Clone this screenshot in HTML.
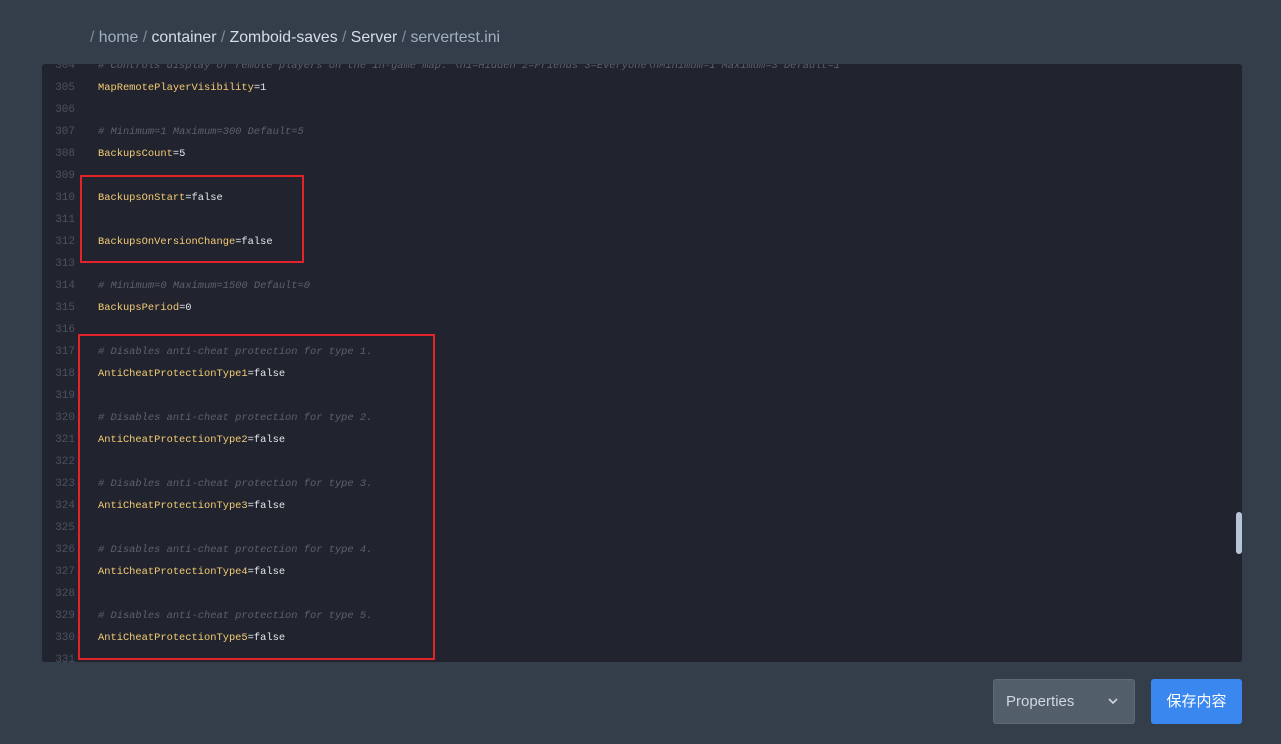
<!DOCTYPE html>
<html><head><meta charset="utf-8"><style>
body{margin:0;width:1281px;height:744px;background:#343e4a;overflow:hidden;font-family:"Liberation Sans","Noto Sans CJK SC",sans-serif;position:relative}
.bc{position:absolute;left:90px;top:29px;font-size:15.8px;color:#d5dde6}
.bc .s{color:#7f8b98}.bc .l{color:#9fb0c0}
.ed{position:absolute;left:42px;top:64px;width:1200px;height:598px;background:#21242e;border-radius:3px;overflow:hidden}
.ln{position:absolute;left:0;height:22px;line-height:22px;font-family:"Liberation Mono",monospace;font-size:10.4px;width:1200px}
.ln .n{position:absolute;left:12px;width:21px;text-align:right;color:#4b5260;font-size:11px}
.ln .c{position:absolute;left:56px;white-space:pre}
.k{color:#f5cc75}.v{color:#e4e7ec}.cm{color:#5a6170;font-style:italic}
.box{position:absolute;border:2px solid #e2232a}
.sb{position:absolute;left:1236px;top:512px;width:6px;height:42px;background:#b7c5d6;border-radius:3px}
.sel{position:absolute;left:993px;top:679px;width:142px;height:45px;background:#535e6b;border:1px solid #5f6a77;border-radius:3px;box-sizing:border-box;color:#cfd6de;font-size:15px;line-height:43px;padding-left:12px}
.sel svg{position:absolute;right:16px;top:18px}
.btn{position:absolute;left:1151px;top:679px;width:91px;height:45px;background:#3a87f0;border-radius:3px;color:#fff;font-size:15px;line-height:45px;text-align:center}
</style></head><body>
<div class="bc"><span class="s">/</span> <span class="l">home</span> <span class="s">/</span> container <span class="s">/</span> Zomboid-saves <span class="s">/</span> Server <span class="s">/</span> <span class="l">servertest.ini</span></div>
<div class="ed">
<div class="ln" style="top:-9px"><span class="n">304</span><span class="c cm"># Controls display of remote players on the in-game map. \n1=Hidden 2=Friends 3=Everyone\nMinimum=1 Maximum=3 Default=1</span></div>
<div class="ln" style="top:13px"><span class="n">305</span><span class="c"><span class="k">MapRemotePlayerVisibility</span><span class="v">=1</span></span></div>
<div class="ln" style="top:35px"><span class="n">306</span></div>
<div class="ln" style="top:57px"><span class="n">307</span><span class="c cm"># Minimum=1 Maximum=300 Default=5</span></div>
<div class="ln" style="top:79px"><span class="n">308</span><span class="c"><span class="k">BackupsCount</span><span class="v">=5</span></span></div>
<div class="ln" style="top:101px"><span class="n">309</span></div>
<div class="ln" style="top:123px"><span class="n">310</span><span class="c"><span class="k">BackupsOnStart</span><span class="v">=false</span></span></div>
<div class="ln" style="top:145px"><span class="n">311</span></div>
<div class="ln" style="top:167px"><span class="n">312</span><span class="c"><span class="k">BackupsOnVersionChange</span><span class="v">=false</span></span></div>
<div class="ln" style="top:189px"><span class="n">313</span></div>
<div class="ln" style="top:211px"><span class="n">314</span><span class="c cm"># Minimum=0 Maximum=1500 Default=0</span></div>
<div class="ln" style="top:233px"><span class="n">315</span><span class="c"><span class="k">BackupsPeriod</span><span class="v">=0</span></span></div>
<div class="ln" style="top:255px"><span class="n">316</span></div>
<div class="ln" style="top:277px"><span class="n">317</span><span class="c cm"># Disables anti-cheat protection for type 1.</span></div>
<div class="ln" style="top:299px"><span class="n">318</span><span class="c"><span class="k">AntiCheatProtectionType1</span><span class="v">=false</span></span></div>
<div class="ln" style="top:321px"><span class="n">319</span></div>
<div class="ln" style="top:343px"><span class="n">320</span><span class="c cm"># Disables anti-cheat protection for type 2.</span></div>
<div class="ln" style="top:365px"><span class="n">321</span><span class="c"><span class="k">AntiCheatProtectionType2</span><span class="v">=false</span></span></div>
<div class="ln" style="top:387px"><span class="n">322</span></div>
<div class="ln" style="top:409px"><span class="n">323</span><span class="c cm"># Disables anti-cheat protection for type 3.</span></div>
<div class="ln" style="top:431px"><span class="n">324</span><span class="c"><span class="k">AntiCheatProtectionType3</span><span class="v">=false</span></span></div>
<div class="ln" style="top:453px"><span class="n">325</span></div>
<div class="ln" style="top:475px"><span class="n">326</span><span class="c cm"># Disables anti-cheat protection for type 4.</span></div>
<div class="ln" style="top:497px"><span class="n">327</span><span class="c"><span class="k">AntiCheatProtectionType4</span><span class="v">=false</span></span></div>
<div class="ln" style="top:519px"><span class="n">328</span></div>
<div class="ln" style="top:541px"><span class="n">329</span><span class="c cm"># Disables anti-cheat protection for type 5.</span></div>
<div class="ln" style="top:563px"><span class="n">330</span><span class="c"><span class="k">AntiCheatProtectionType5</span><span class="v">=false</span></span></div>
<div class="ln" style="top:585px"><span class="n">331</span></div>
</div>
<div class="box" style="left:80px;top:175px;width:220px;height:84px"></div>
<div class="box" style="left:78px;top:334px;width:353px;height:322px"></div>
<div class="sb"></div>
<div class="sel">Properties<svg width="10" height="7" viewBox="0 0 10 7"><path d="M1 1l4 4 4-4" fill="none" stroke="#cfd6de" stroke-width="1.6"/></svg></div>
<div class="btn">保存内容</div>
</body></html>
